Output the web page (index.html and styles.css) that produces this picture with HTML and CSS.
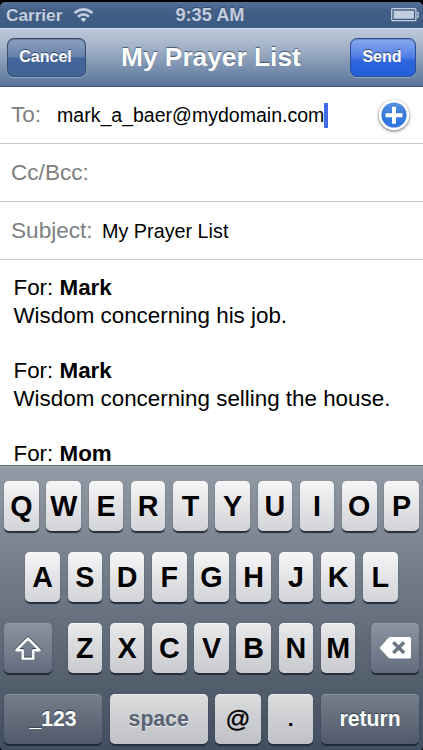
FILE: index.html
```html
<!DOCTYPE html>
<html lang="en">
<head>
<meta charset="utf-8">
<title>My Prayer List</title>
<link rel="stylesheet" href="styles.css">
</head>
<body>
<div class="phone">
  <header class="status">
    <div class="carrier"><span>Carrier</span>
      <svg class="wifi" viewBox="0 0 22 16"><g fill="none" stroke="#c3cddd" stroke-width="2.8"><path d="M1.6 6Q11-2 20.4 6"/><path d="M5.2 9.8Q11 4.8 16.8 9.8"/></g><path d="M8 12.3Q11 9.7 14 12.3L11 15.5Z" fill="#c3cddd"/></svg>
    </div>
    <span class="time">9:35 AM</span>
    <svg class="battery" viewBox="0 0 28 14"><rect x=".7" y=".7" width="24.2" height="12" rx="1.2" fill="none" stroke="#c3cddd" stroke-width="1.3"/><rect x="2.7" y="2.7" width="20.2" height="8" fill="#c3cddd"/><path d="M25.5 4.5h1.6v4.6h-1.6" fill="none" stroke="#c3cddd" stroke-width="1.2"/></svg>
  </header>
  <nav class="navbar">
    <button class="btn cancel">Cancel</button>
    <h1>My Prayer List</h1>
    <button class="btn send">Send</button>
  </nav>
  <section class="fields">
    <div class="field"><span class="label to">To:</span><span class="value address">mark_a_baer@mydomain.com</span><i class="caret"></i>
      <svg class="add" viewBox="0 0 36 38"><defs><linearGradient id="blue" x2="0" y2="1"><stop stop-color="#5a91df"/><stop offset=".5" stop-color="#347bd9"/><stop offset="1" stop-color="#2f78e5"/></linearGradient></defs><circle class="disc" cx="18" cy="17" r="15.3" fill="#fff"/><circle cx="18" cy="17" r="12.6" fill="url(#blue)"/><path d="M18 8.8v17M9.5 17.3h17" stroke="#fff" stroke-width="4"/></svg>
    </div>
    <div class="field"><span class="label">Cc/Bcc:</span></div>
    <div class="field"><span class="label subject">Subject:</span><span class="value">My Prayer List</span></div>
  </section>
  <main class="message">
    <p>For: <b>Mark</b><br>Wisdom concerning his job.</p>
    <p>For: <b>Mark</b><br>Wisdom concerning selling the house.</p>
    <p>For: <b>Mom</b></p>
  </main>
  <section class="keyboard">
    <div class="row"><span class="key">Q</span><span class="key">W</span><span class="key">E</span><span class="key">R</span><span class="key">T</span><span class="key">Y</span><span class="key">U</span><span class="key">I</span><span class="key">O</span><span class="key">P</span></div>
    <div class="row"><span class="key">A</span><span class="key">S</span><span class="key">D</span><span class="key">F</span><span class="key">G</span><span class="key">H</span><span class="key">J</span><span class="key">K</span><span class="key">L</span></div>
    <div class="row ends">
      <span class="key dark side"><svg class="shift" viewBox="0 0 28 25"><path d="M14 2.3L25.6 14.2H19.3V22.6H8.7V14.2H2.4Z" fill="none" stroke="#394352" stroke-width="2.2" transform="translate(0 -1)"/><path d="M14 2.3L25.6 14.2H19.3V22.6H8.7V14.2H2.4Z" fill="none" stroke="#fff" stroke-width="2.4" stroke-linejoin="round"/></svg></span>
      <div class="letters"><span class="key">Z</span><span class="key">X</span><span class="key">C</span><span class="key">V</span><span class="key">B</span><span class="key">N</span><span class="key">M</span></div>
      <span class="key dark side"><svg class="delete" viewBox="0 0 33 22"><path d="M.5 11L9.5.8Q10.2 0 11.3 0H30.5Q32 0 32 1.5V20Q32 21.5 30.5 21.5H11.3Q10.2 21.5 9.5 20.7Z" fill="#fff"/><path d="M14.3 5.2L25.1 16M25.1 5.2L14.3 16" stroke="#6c7584" stroke-width="3.4"/></svg></span>
    </div>
    <div class="row bottom"><span class="key dark wide">_123</span><span class="key wide space">space</span><span class="key mid at">@</span><span class="key mid dot">.</span><span class="key dark wide">return</span></div>
  </section>
</div>
</body>
</html>
```
FILE: styles.css
```css
* { box-sizing: border-box; }
body { margin: 0; background: #000; font-family: "Liberation Sans", Arial, sans-serif; }
.phone { width: 423px; height: 750px; padding-top: 2px; display: flex; flex-direction: column; overflow: hidden; background: #000; }
.status {
  flex: none; height: 26px; padding: 0 4px 0 6px; display: grid; grid-template-columns: 1fr auto 1fr; align-items: center;
  color: #c3cddd; font-size: 17.2px; font-weight: 700; border-radius: 5px 5px 0 0;
  background: linear-gradient(#536f94, #426087 35%, #3c5a82); text-shadow: 0 -1px 0 #344e70;
}
.carrier { display: flex; align-items: center; gap: 11px; }
.wifi { width: 21px; height: 16px; }
.time { font-size: 18.2px; margin-right: 5px; }
.battery { width: 28px; height: 14px; justify-self: end; }
.navbar {
  flex: none; height: 59px; padding: 9px 7px 0; display: grid; grid-template-columns: 79px 1fr 66px; align-items: start;
  background: linear-gradient(#bdc9da, #a5b4ca 30%, #5c779c 96%); border-top: 1px solid #d7dfeb; border-bottom: 1px solid #3c5377;
}
h1 { margin: 2px 0 0 35px; color: #fff; font-size: 26.3px; line-height: 34px; font-weight: 700; text-shadow: 0 -1px 1px #445774; white-space: nowrap; }
.btn {
  height: 39px; padding: 0; margin: 0; color: #fff; font: 700 16px/34px "Liberation Sans", Arial, sans-serif;
  border: 1px solid #354e73; border-top: 1.5px solid #3a4860; border-radius: 7px; text-shadow: 0 -1px 0 #2e4669;
  box-shadow: 0 1px 0 #92a5c1, inset 0 1px 1px #3c557d66;
}
.cancel { padding: 0 2px 2px 0; background: linear-gradient(#8da1bf, #6681a8 48%, #43659a 52%, #416494); }
.send { padding: 0 2px 2px 0; background: linear-gradient(#8baaf0, #517fe5 48%, #2d65df 60%, #235ed8); border-color: #2b4c96; }
.fields { flex: none; background: #fff; }
.field { height: 58px; display: flex; align-items: center; padding: 0 11px; border-bottom: 1px solid #c6c6c6; }
.field:first-child { height: 57px; }
.label { color: #808080; font-size: 22.6px; line-height: 28px; }
.to { width: 46px; }
.subject { width: 91px; }
.value { color: #000; font-size: 19.8px; line-height: 26px; }
.address { font-size: 19.55px; }
.caret { width: 4px; height: 25px; background: #4169e8; }
.add { width: 36px; height: 38px; margin: 3px 0 0 auto; overflow: visible; }
.disc { filter: drop-shadow(0 1px 1.5px #0009); }
.message { flex: none; height: 205px; padding: 14px 13.5px 0; background: #fff; overflow: hidden; color: #000; font-size: 22.38px; line-height: 27.7px; white-space: nowrap; }
.message p { margin: 0 0 27.7px; }
.keyboard {
  flex: none; height: 286px; padding: 15px 4px 0; display: flex; flex-direction: column; gap: 20.8px;
  border-top: 1px solid #60656d; border-radius: 0 0 5px 5px; box-shadow: inset 0 1px 0 #a1a8b2;
  background: linear-gradient(#929aa5, #6b7482 48%, #525d6c 78%, #414e60);
}
.row, .letters { display: flex; justify-content: center; gap: 7.73px; }
.ends, .bottom { justify-content: space-between; }
.bottom { gap: 0; }
.key {
  width: 34.5px; height: 50.2px; display: flex; align-items: center; justify-content: center;
  border-radius: 5px; color: #000; font-size: 28.7px; line-height: 50px; font-weight: 700;
  background: linear-gradient(#f6f6f7, #d2d3d7); box-shadow: 0 1.7px 1px #252d39, inset 0 1px 0 #fff8;
}
.letters .key { background: linear-gradient(#e9e9eb, #c9cacf); }
.bottom .key { background: linear-gradient(#dbdcde, #bfc1c5); }
.side { width: 48px; }
.row .dark { color: #fff; text-shadow: 0 -1px 1px #333d4b; background: linear-gradient(#8b94a1, #626c7d); box-shadow: 0 1.7px 1px #202936, inset 0 1px 0 #9aa2ad99; }
.bottom .dark { background: linear-gradient(#757e8b, #505a6a); }
.wide { width: 98px; font-size: 21.2px; }
.row .space { color: #596373; text-shadow: 0 1px 0 #fff9; }
.mid { width: 45.2px; }
.at { font-size: 24.5px; font-weight: 400; -webkit-text-stroke: .3px #000; }
.dot { font-size: 21px; }
.shift { width: 28px; height: 25px; }
.delete { width: 33px; height: 22px; }
```
